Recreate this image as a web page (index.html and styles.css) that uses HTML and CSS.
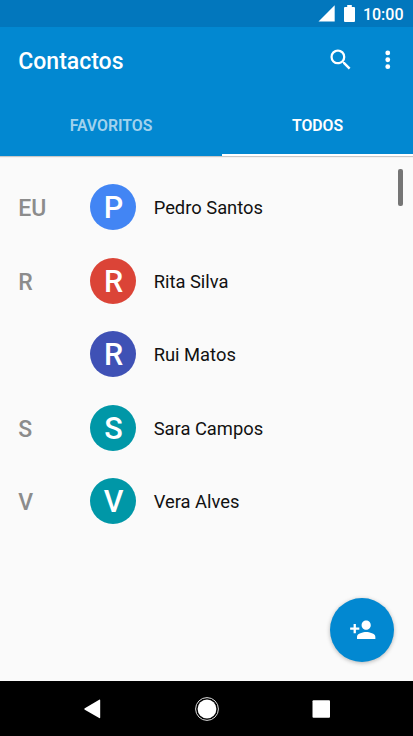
FILE: index.html
```html
<!DOCTYPE html>
<html lang="pt">
<head>
<meta charset="utf-8">
<title>Contactos</title>
<link rel="stylesheet" href="styles.css">
</head>
<body>
<div class="status-bar">
  <svg class="signal" viewBox="0 0 17 17"><path d="M.5 16.5L16.7.3v16.2z"/></svg>
  <svg class="battery" viewBox="0 0 11 17"><path d="M3.2 0h4.600v2H10q1 0 1 1v13q0 1-1 1H1q-1 0-1-1V3q0-1 1-1h2.200z"/></svg>
  <span class="clock">10:00</span>
</div>
<header class="app-bar">
  <div class="toolbar">
    <h1 class="title">Contactos</h1>
    <svg class="icon search" viewBox="0 0 24 24"><path d="M15.5 14h-.79l-.28-.27A6.471 6.471 0 0 0 16 9.500 6.500 6.500 0 1 0 9.500 16c1.610 0 3.090-.59 4.230-1.570l.27.28v.79l5 4.990L20.490 19l-4.990-5zm-6 0C7.010 14 5 11.990 5 9.500S7.010 5 9.500 5 14 7.010 14 9.500 11.990 14 9.500 14z"/></svg>
    <svg class="icon more" viewBox="0 0 24 24"><circle cx="12" cy="6" r="2.1"/><circle cx="12" cy="12" r="2.1"/><circle cx="12" cy="18" r="2.1"/></svg>
  </div>
  <nav class="tabs">
    <div class="tab">FAVORITOS</div>
    <div class="tab active">TODOS</div>
  </nav>
</header>
<main class="content">
  <ul class="contacts">
    <li class="contact"><span class="section">EU</span><span class="avatar blue">P</span><span class="name">Pedro Santos</span></li>
    <li class="contact"><span class="section">R</span><span class="avatar red">R</span><span class="name">Rita Silva</span></li>
    <li class="contact"><span class="section"></span><span class="avatar indigo">R</span><span class="name">Rui Matos</span></li>
    <li class="contact"><span class="section">S</span><span class="avatar teal">S</span><span class="name">Sara Campos</span></li>
    <li class="contact"><span class="section">V</span><span class="avatar teal">V</span><span class="name">Vera Alves</span></li>
  </ul>
  <div class="scroll-thumb"></div>
  <div class="fab">
    <svg class="icon" viewBox="0 0 24 24"><path d="M15 12c2.210 0 4-1.790 4-4s-1.790-4-4-4-4 1.790-4 4 1.790 4 4 4zm-9-2V7H4v3H1v2h3v3h2v-3h3v-2H6zm9 4c-2.670 0-8 1.340-8 4v2h16v-2c0-2.660-5.330-4-8-4z"/></svg>
  </div>
</main>
<footer class="nav-bar">
  <svg viewBox="0 0 26 26"><path d="M4.800 12.200L19.200 3.700q1-.5 1 .6v17.200q0 1.100-1 .6L4.800 13.700q-1.300-.75 0-1.500z"/></svg>
  <svg viewBox="0 0 26 26"><circle cx="13" cy="13" r="9.400"/><circle class="ring" cx="13" cy="13" r="11.400"/></svg>
  <svg viewBox="0 0 26 26"><rect x="4.500" y="4.300" width="17.500" height="17.500" rx="1"/></svg>
</footer>
</body>
</html>
```
FILE: styles.css
```css
* {
  box-sizing: border-box;
}

body {
  margin: 0;
  height: 736px;
  display: flex;
  flex-direction: column;
  overflow: hidden;
  background: #fafafa;
  font-family: Roboto, sans-serif;
}

svg {
  display: block;
  overflow: visible;
  fill: #fff;
}

.icon {
  width: 27.5px;
  height: 27.5px;
}

.status-bar {
  height: 27px;
  flex: none;
  display: flex;
  justify-content: flex-end;
  padding: 5px 9.500px 0 0;
  background: #0277bd;
  color: #fff;
}

.signal {
  width: 17px;
  height: 17px;
  margin-right: 9px;
}

.battery {
  width: 11px;
  height: 17px;
  margin-right: 8px;
}

.clock {
  font-size: 16px;
  font-weight: 500;
  line-height: 19px;
}

.app-bar {
  height: 129px;
  flex: none;
  background: #0288d1;
  box-shadow: 0 1px 1px rgba(0, 0, 0, 0.2);
  position: relative;
}

.toolbar {
  height: 66px;
  display: flex;
  align-items: center;
  padding: 0 11.500px 0 18.300px;
}

.title {
  flex: 1;
  margin: 3px 0 0;
  color: #fff;
  font-size: 23px;
  font-weight: 500;
  line-height: 28px;
}

.search {
  margin-right: 20px;
}

.tabs {
  height: 63px;
  display: grid;
  grid-template-columns: 222px 1fr;
}

.tab {
  padding-top: 22px;
  border-bottom: 2px solid transparent;
  color: rgba(255, 255, 255, 0.65);
  font-size: 15.800px;
  font-weight: 600;
  line-height: 22px;
  text-align: center;
}

.tab.active {
  border-color: #fff;
  color: #fff;
}

.content {
  flex: 1;
  position: relative;
}

.contacts {
  margin: 0;
  padding: 14.400px 0 0;
  list-style: none;
}

.contact {
  height: 73.500px;
  display: grid;
  grid-template-columns: 72.200px 46px 1fr;
  align-items: center;
  padding-left: 18.300px;
}

.section {
  padding-top: 4px;
  color: #8c8c8c;
  font-size: 23px;
  font-weight: 500;
  line-height: 28px;
}

.avatar {
  height: 46px;
  padding-top: 1px;
  border-radius: 50%;
  color: #fff;
  font-size: 30.500px;
  font-weight: 500;
  line-height: 46px;
  text-align: center;
}

.blue {
  background: #4285f4;
}

.red {
  background: #db4437;
}

.indigo {
  background: #3f51b5;
}

.teal {
  background: #0097a7;
}

.name {
  padding: 2px 0 0 17.200px;
  color: #111;
  font-size: 18.350px;
  line-height: 24px;
}

.scroll-thumb {
  position: absolute;
  top: 13px;
  right: 10px;
  width: 5px;
  height: 37px;
  border-radius: 2px;
  background: #757575;
}

.fab {
  position: absolute;
  right: 18.600px;
  bottom: 19px;
  width: 64px;
  height: 64px;
  display: flex;
  align-items: center;
  justify-content: center;
  border-radius: 50%;
  background: #0288d1;
  box-shadow: 0 1px 4px rgba(0, 0, 0, 0.28);
}

.nav-bar {
  height: 55px;
  flex: none;
  display: flex;
  align-items: center;
  justify-content: space-between;
  padding: 0 79.500px 0 79.500px;
  background: #000;
}

.nav-bar svg {
  width: 26px;
  height: 26px;
}

.ring {
  fill: none;
  stroke: #ddd;
  stroke-width: 1;
}
```
